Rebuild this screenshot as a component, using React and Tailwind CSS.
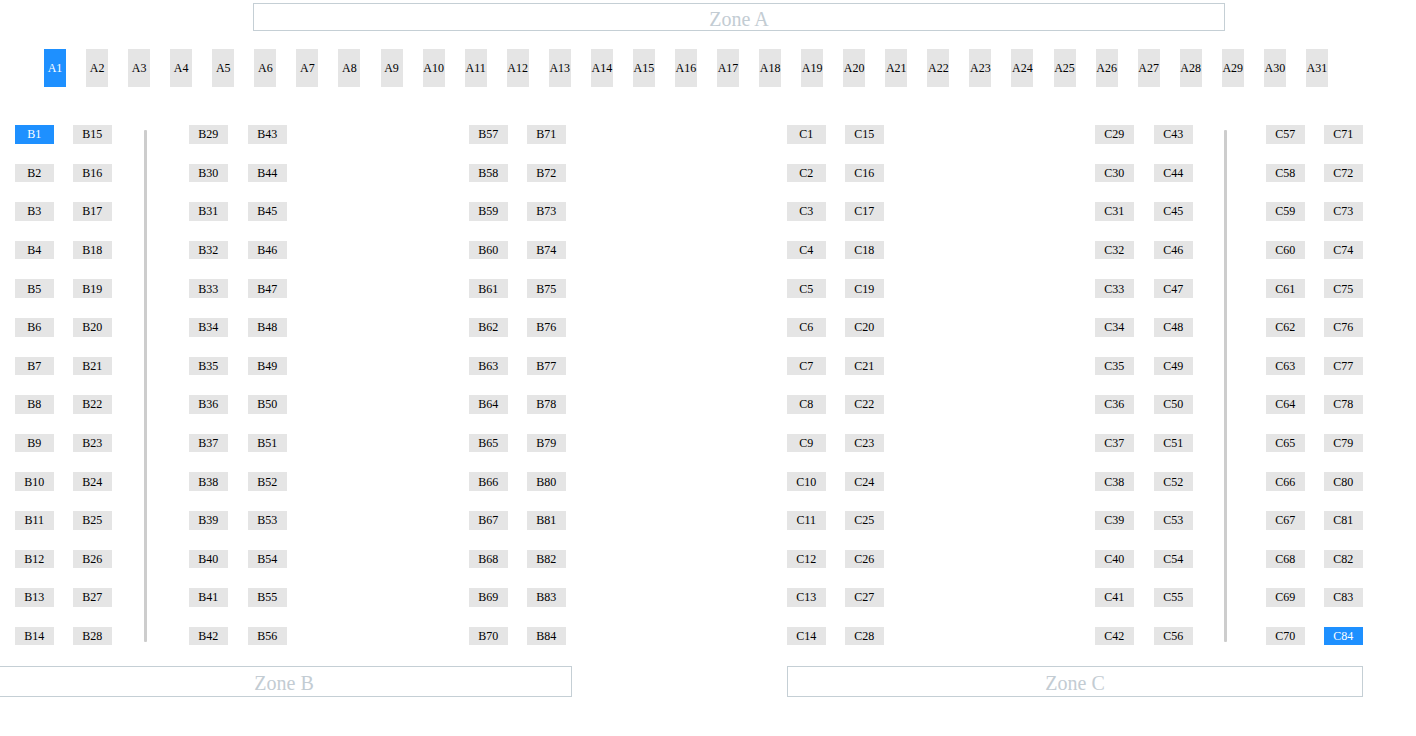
import React from "react";

const serif = { fontFamily: '"Liberation Serif", "Times New Roman", serif' };

function Seat({ label, selected, className }) {
  return (
    <div
      className={
        "flex items-center justify-center text-[12px] leading-none " +
        (selected ? "bg-[#1e90ff] text-white " : "bg-[#e5e5e5] text-black ") +
        className
      }
    >
      {label}
    </div>
  );
}

function Column({ prefix, start, ml, selected }) {
  const seats = [];
  for (let i = 0; i < 14; i++) {
    const n = start + i;
    seats.push(
      <Seat
        key={n}
        label={prefix + n}
        selected={selected === n}
        className="w-[38.7px] h-[18.6px]"
      />
    );
  }
  return (
    <div className="flex flex-col gap-[20px] shrink-0" style={{ marginLeft: ml }}>
      {seats}
    </div>
  );
}

function Divider({ ml }) {
  return (
    <div className="shrink-0 pt-[5px]" style={{ marginLeft: ml }}>
      <div className="w-[3px] h-[512px] bg-[#cdcdcd] rounded-[1px]" />
    </div>
  );
}

export default function App() {
  const aSeats = [];
  for (let i = 1; i <= 31; i++) {
    aSeats.push(
      <Seat
        key={i}
        label={"A" + i}
        selected={i === 1}
        className="w-[22px] h-[38px] shrink-0"
      />
    );
  }

  return (
    <div className="w-[1416px] h-[736px] bg-white overflow-hidden" style={serif}>
      <div className="pt-[3px] pl-[253px]">
        <div className="w-[972px] h-[28px] border border-[#c5cfd5] flex items-center justify-center pt-[3px] text-[20px] text-[#c3ccd3] leading-none">
          Zone A
        </div>
      </div>

      <div className="flex gap-[20.07px] pl-[44px] mt-[18px]">{aSeats}</div>

      <div className="flex mt-[38px]">
        <Column prefix="B" start={1} ml="15px" selected={1} />
        <Column prefix="B" start={15} ml="19.3px" />
        <Divider ml="32.3px" />
        <Column prefix="B" start={29} ml="42px" />
        <Column prefix="B" start={43} ml="20.3px" />
        <Column prefix="B" start={57} ml="182.3px" />
        <Column prefix="B" start={71} ml="19.3px" />
        <Column prefix="C" start={1} ml="221.3px" />
        <Column prefix="C" start={15} ml="19.3px" />
        <Column prefix="C" start={29} ml="211.3px" />
        <Column prefix="C" start={43} ml="20.3px" />
        <Divider ml="31.3px" />
        <Column prefix="C" start={57} ml="39px" />
        <Column prefix="C" start={71} ml="19.3px" selected={84} />
      </div>

      <div className="flex mt-[20.4px]">
        <div className="ml-[-4px] w-[576px] h-[31px] border border-[#c5cfd5] flex items-center justify-center pt-[3px] text-[20px] text-[#c3ccd3] leading-none shrink-0">
          Zone B
        </div>
        <div className="ml-[215px] w-[576px] h-[31px] border border-[#c5cfd5] flex items-center justify-center pt-[3px] text-[20px] text-[#c3ccd3] leading-none shrink-0">
          Zone C
        </div>
      </div>
    </div>
  );
}
